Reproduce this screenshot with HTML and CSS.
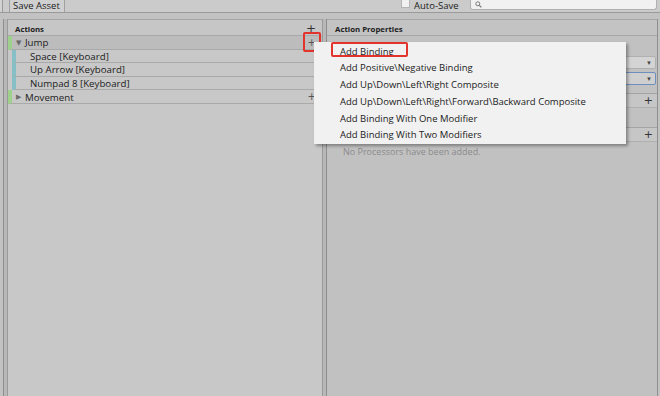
FILE: index.html
```html
<!DOCTYPE html>
<html lang="en">
<head>
    <meta charset="UTF-8">
    <title>Input Actions</title>
    <link rel="stylesheet" href="styles.css">
</head>
<body>
    <div class="toolbar">
        <div class="tool-stub"></div>
        <div class="tool-btn">Save Asset</div>
        <div class="tool-spacer"></div>
        <div class="auto-save">
            <span class="checkbox"></span>
            <span>Auto-Save</span>
        </div>
        <div class="search">
            <svg width="7" height="7" viewBox="0 0 7 7"><circle cx="2.8" cy="2.8" r="2" fill="none" stroke="#777" stroke-width="1"/><path d="M4.3 4.3 L6.3 6.3" stroke="#777" stroke-width="1.2"/></svg>
        </div>
    </div>

    <div class="workspace">
        <div class="edge"></div>

        <div class="actions-panel">
            <div class="panel-header">
                <span>Actions</span>
                <span class="plus">+</span>
            </div>
            <div class="row action selected">
                <span class="arrow">&#9660;</span>
                <span class="label">Jump</span>
                <span class="plus small">+</span>
            </div>
            <div class="row binding"><span class="label">Space [Keyboard]</span></div>
            <div class="row binding"><span class="label">Up Arrow [Keyboard]</span></div>
            <div class="row binding"><span class="label">Numpad 8 [Keyboard]</span></div>
            <div class="row action">
                <span class="arrow">&#9654;</span>
                <span class="label">Movement</span>
                <span class="plus small">+</span>
            </div>
        </div>

        <div class="divider"></div>

        <div class="props-panel">
            <div class="panel-header">
                <span>Action Properties</span>
            </div>
            <div class="props-body">
                <div class="field-row">
                    <div class="dropdown"><span>&#9660;</span></div>
                </div>
                <div class="field-row">
                    <div class="dropdown focused"><span>&#9660;</span></div>
                </div>
                <div class="section">
                    <span class="plus section-plus">+</span>
                </div>
                <div class="section-gap"></div>
                <div class="section">
                    <span class="plus section-plus">+</span>
                </div>
                <div class="empty-note">No Processors have been added.</div>
            </div>
        </div>

        <div class="edge right"></div>
    </div>

    <div class="mark mark-plus"></div>

    <div class="popup">
        <div class="popup-item">Add Binding</div>
        <div class="popup-item">Add Positive\Negative Binding</div>
        <div class="popup-item">Add Up\Down\Left\Right Composite</div>
        <div class="popup-item">Add Up\Down\Left\Right\Forward\Backward Composite</div>
        <div class="popup-item">Add Binding With One Modifier</div>
        <div class="popup-item">Add Binding With Two Modifiers</div>
    </div>

    <div class="mark mark-item"></div>
</body>
</html>
```

FILE: styles.css
```css
* {
    margin: 0;
    padding: 0;
    box-sizing: border-box;
}

body {
    width: 660px;
    height: 396px;
    overflow: hidden;
    background: #c2c2c2;
    font-family: 'Open Sans', 'Noto Sans', sans-serif;
    font-size: 9.5px;
    color: #1c1c1c;
    display: flex;
    flex-direction: column;
    position: relative;
}

/* top toolbar */
.toolbar {
    height: 13px;
    display: flex;
    align-items: stretch;
    background: #cbcbcb;
    border-bottom: 1px solid #9a9a9a;
}

.tool-stub {
    width: 3px;
    border-right: 1px solid #9a9a9a;
    background: #d2d2d2;
}

.tool-btn {
    margin-left: 6px;
    width: 56px;
    padding-left: 3px;
    line-height: 12px;
    background: #d0d0d0;
    border-left: 1px solid #a0a0a0;
    border-right: 1px solid #a0a0a0;
    font-size: 9.5px;
}

.tool-spacer {
    flex: 1;
}

.auto-save {
    display: flex;
    align-items: flex-start;
    gap: 4px;
    line-height: 12px;
    width: 69px;
}

.checkbox {
    width: 9px;
    height: 8px;
    background: #f1f1f1;
    border: 1px solid #b5b5b5;
    border-top: none;
}

.search {
    width: 187px;
    height: 10px;
    margin-right: 3px;
    background: #f1f1f1;
    border: 1px solid #b0b0b0;
    border-top: none;
    border-radius: 0 0 3px 3px;
    padding: 1px 0 0 4px;
}

.search svg {
    display: block;
}

/* panels */
.workspace {
    flex: 1;
    display: flex;
    padding-top: 6px;
}

.edge {
    width: 5px;
    margin-left: 3px;
    border-left: 1px solid #8e8e8e;
    border-right: 1px solid #9a9a9a;
    background: #b8b8b8;
}

.edge.right {
    width: 3px;
    margin-left: 0;
    border-right: none;
    background: #c2c2c2;
}

.actions-panel {
    width: 314px;
    background: #c8c8c8;
    border-top: 1px solid #a5a5a5;
}

.props-panel {
    flex: 1;
    background: #c1c1c1;
    border-top: 1px solid #a5a5a5;
}

.divider {
    width: 5px;
    border-left: 1px solid #9a9a9a;
    border-right: 1px solid #8e8e8e;
    background: #b8b8b8;
}

.panel-header {
    height: 16px;
    display: flex;
    align-items: center;
    justify-content: space-between;
    padding: 2px 6px 0 7px;
    font-size: 7.8px;
    font-weight: bold;
    background: #c6c6c6;
    border-bottom: 1px solid #a8a8a8;
}

.props-panel .panel-header {
    padding-left: 8px;
    background: #c3c3c3;
}

.plus {
    font-family: 'DejaVu Sans', sans-serif;
    font-size: 12px;
    font-weight: normal;
    color: #333;
    line-height: 10px;
}

.plus.small {
    font-size: 10px;
    color: #555;
}

/* tree rows */
.row {
    height: 13.6px;
    display: flex;
    align-items: center;
    border-bottom: 1px solid #a9a9a9;
    padding-top: 1px;
    font-size: 9.7px;
}

.row .label {
    flex: 1;
}

.action {
    padding-left: 4px;
    border-left: 4px solid #9ed28c;
}

.action.selected {
    background: #bcbcbc;
}

.action .plus {
    margin-right: 6px;
}

.arrow {
    font-family: 'DejaVu Sans', sans-serif;
    font-size: 7px;
    color: #6a6a6a;
    width: 9px;
}

.binding {
    margin-left: 4px;
    padding-left: 14px;
    border-left: 4px solid #86bfc6;
}

/* property side */
.props-body {
    padding-top: 20px;
}

.field-row {
    height: 16px;
    display: flex;
    justify-content: flex-end;
    padding-right: 1px;
}

.dropdown {
    width: 200px;
    height: 13px;
    background: #d4d4d4;
    border: 1px solid #b0b0b0;
    border-radius: 2px;
    display: flex;
    justify-content: flex-end;
    align-items: center;
    padding-right: 3px;
    font-size: 6px;
    color: #444;
}

.dropdown.focused {
    border-color: #6d8fbe;
    background: #cfcfcf;
}

.section {
    margin-top: 5px;
    height: 15px;
    border-top: 1px solid #a4a4a4;
    border-bottom: 1px solid #b0b0b0;
    background: #c6c6c6;
    display: flex;
    justify-content: flex-end;
    align-items: center;
    padding-right: 4px;
}

.section-gap {
    height: 14px;
}

.section-plus {
    font-size: 11px;
}

.empty-note {
    padding: 3px 0 0 16px;
    color: #8b8b8b;
    font-size: 9px;
}

/* context menu */
.popup {
    position: absolute;
    left: 314px;
    top: 42px;
    width: 312px;
    height: 102px;
    background: #f1f1f1;
    box-shadow: 2px 2px 3px rgba(0, 0, 0, 0.35);
    padding: 1.5px 0 0 26px;
}

.popup-item {
    height: 16.8px;
    line-height: 16.8px;
    font-size: 9.5px;
    color: #222;
    white-space: nowrap;
}

/* red highlight boxes */
.mark {
    position: absolute;
    border: 2px solid #e2342c;
    border-radius: 2px;
}

.mark-plus {
    left: 303px;
    top: 32px;
    width: 18px;
    height: 20px;
}

.mark-item {
    left: 331px;
    top: 42px;
    width: 77px;
    height: 15px;
}
```
